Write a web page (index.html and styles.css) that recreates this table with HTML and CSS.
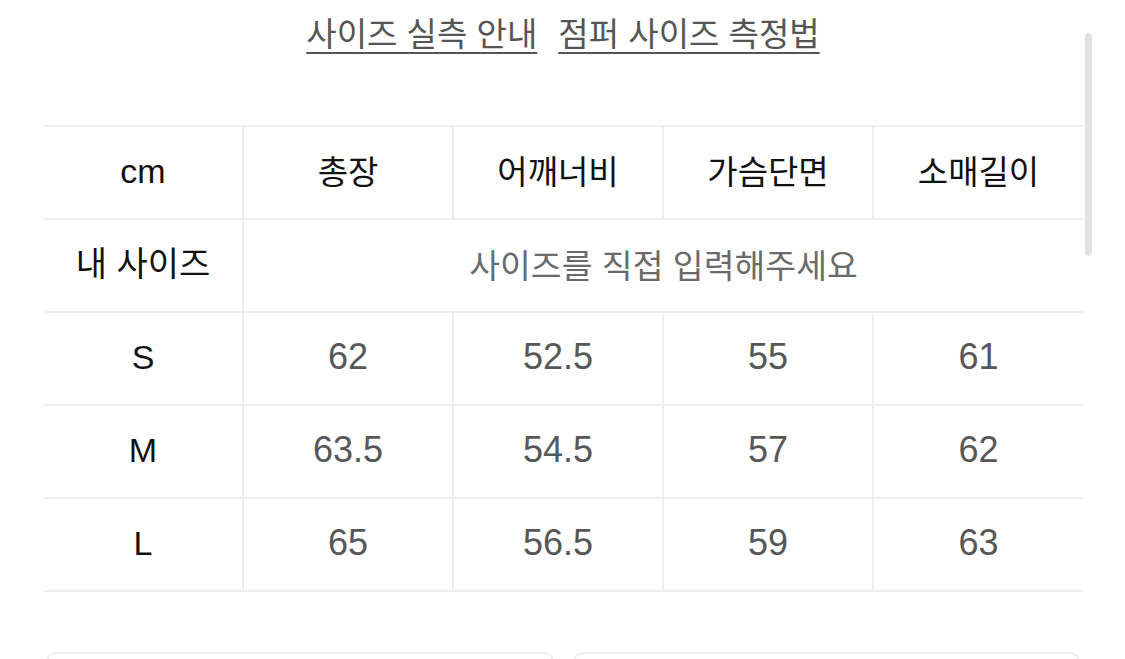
FILE: index.html
```html
<!DOCTYPE html>
<html lang="ko">
<head>
<meta charset="utf-8">
<title>사이즈</title>
<link rel="stylesheet" href="styles.css">
</head>
<body>
<div class="page">
  <nav class="links">
    <a class="link" href="#">사이즈 실측 안내</a>
    <a class="link" href="#">점퍼 사이즈 측정법</a>
  </nav>
  <table class="size-table">
    <colgroup>
      <col class="c0"><col class="c1"><col class="c1"><col class="c1"><col class="c1">
    </colgroup>
    <tr class="head">
      <th>cm</th><th>총장</th><th>어깨너비</th><th>가슴단면</th><th>소매길이</th>
    </tr>
    <tr>
      <th>내 사이즈</th><td colspan="4" class="hint">사이즈를 직접 입력해주세요</td>
    </tr>
    <tr>
      <th>S</th><td>62</td><td>52.5</td><td>55</td><td>61</td>
    </tr>
    <tr>
      <th>M</th><td>63.5</td><td>54.5</td><td>57</td><td>62</td>
    </tr>
    <tr>
      <th>L</th><td>65</td><td>56.5</td><td>59</td><td>63</td>
    </tr>
  </table>
  <div class="boxes">
    <div class="box"></div>
    <div class="box"></div>
  </div>
</div>
<div class="scrollbar"></div>
</body>
</html>
```
FILE: styles.css
```css
html, body {
  margin: 0;
  padding: 0;
  background: #fff;
  overflow: hidden;
}
body {
  width: 1125px;
  height: 659px;
  font-family: "Liberation Sans", "Noto Sans CJK KR", sans-serif;
}
.page {
  padding: 0 43px 0 44px;
}
.links {
  display: flex;
  justify-content: center;
  gap: 21px;
  height: 64px;
  align-items: center;
}
.link {
  font-family: "Noto Sans CJK KR", sans-serif;
  font-size: 33px;
  color: #555;
  text-decoration: underline;
  text-decoration-thickness: 2px;
  text-underline-offset: 6px;
  line-height: 1;
}
.size-table {
  margin-top: 61px;
  width: 1038px;
  border-collapse: collapse;
  table-layout: fixed;
}
.c0 { width: 199px; }
.c1 { width: 210px; }
.size-table tr {
  height: 93px;
}
.size-table th,
.size-table td {
  border-top: 2px solid #eeeeee;
  border-bottom: 2px solid #eeeeee;
  border-left: 2px solid #eeeeee;
  padding: 0 0 4px 0;
  text-align: center;
  vertical-align: middle;
  font-size: 36px;
  line-height: 1;
}
.size-table tr > :first-child {
  border-left: none;
}
.size-table th {
  font-weight: normal;
  color: #111;
  font-family: "Liberation Sans", "Noto Sans CJK KR", sans-serif;
  font-size: 34px;
}
.size-table tr.head th {
  font-family: "Noto Sans CJK KR", sans-serif;
  font-size: 33px;
}
.size-table tr.head th:first-child {
  font-family: "Liberation Sans", sans-serif;
  font-size: 34px;
}
.size-table td {
  color: #575757;
}
.size-table td.hint {
  font-family: "Noto Sans CJK KR", sans-serif;
  font-size: 33.5px;
  color: #6a6a6a;
}
.boxes {
  display: flex;
  gap: 19px;
  margin-top: 60px;
  padding: 0 2px;
}
.box {
  flex: 1;
  height: 40px;
  border: 2px solid #eeeeee;
  border-radius: 10px;
}
.scrollbar {
  position: absolute;
  left: 1085px;
  top: 33px;
  width: 7px;
  height: 223px;
  border-radius: 4px;
  background: #e2e2e2;
}
```
